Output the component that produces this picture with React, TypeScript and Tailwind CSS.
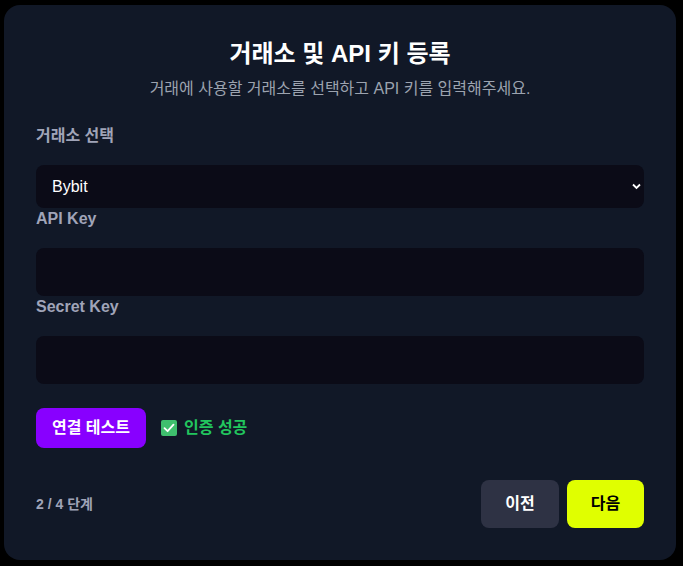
import React from 'react';

const font = { fontFamily: '"Liberation Sans", "Noto Sans CJK KR", sans-serif' };

function CheckBox() {
  return (
    <svg width="16" height="16" viewBox="0 0 16 16" className="shrink-0">
      <rect x="0" y="0" width="16" height="16" rx="2" fill="#3fbf6e" />
      <path d="M3.5 8.2 L6.6 11.2 L12.5 4.6" fill="none" stroke="#ffffff" strokeWidth="1.8" strokeLinecap="round" strokeLinejoin="round" />
    </svg>
  );
}

export default function App() {
  return (
    <div className="min-h-screen bg-black p-[5px_7px_6px_4px]" style={font}>
      <div className="bg-[#111827] rounded-2xl px-8 pt-[33px] pb-8 w-[672px] h-[555px] flex flex-col">
        <h1 className="text-center text-white text-[24px] font-bold leading-8">거래소 및 API 키 등록</h1>
        <p className="text-center text-[#9ca3af] text-[16px] leading-6 mt-[7px]">
          거래에 사용할 거래소를 선택하고 API 키를 입력해주세요.
        </p>

        <label className="block text-[#a0a4b8] text-[16px] font-bold leading-5 mt-[25px] mb-[19px]">거래소 선택</label>
        <div className="relative">
          <select
            defaultValue="Bybit"
            className="appearance-none w-full h-[43px] rounded-lg bg-[#0b0b17] text-white text-[16px] pl-4 pr-8 outline-none"
          >
            <option>Bybit</option>
            <option>Binance</option>
            <option>OKX</option>
          </select>
          <svg className="absolute right-[3px] top-[18px] pointer-events-none" width="9" height="7" viewBox="0 0 9 7">
            <path d="M1 1.5 L4.5 5 L8 1.5" fill="none" stroke="#ffffff" strokeWidth="1.8" />
          </svg>
        </div>

        <label className="block text-[#a0a4b8] text-[16px] font-bold leading-5 mt-px mb-[19px]">API Key</label>
        <input className="w-full h-12 rounded-lg bg-[#0b0b17] text-white px-4 outline-none" />

        <label className="block text-[#a0a4b8] text-[16px] font-bold leading-5 mt-px mb-[19px]">Secret Key</label>
        <input className="w-full h-12 rounded-lg bg-[#0b0b17] text-white px-4 outline-none" />

        <div className="flex items-center gap-[15px] mt-6">
          <button className="h-10 w-[110px] rounded-lg bg-[#8800ff] text-white text-[16px] font-bold">연결 테스트</button>
          <div className="flex items-center gap-[7px] text-[#22c55e] text-[16px] font-bold">
            <CheckBox />
            <span>인증 성공</span>
          </div>
        </div>

        <div className="flex items-center justify-between mt-8">
          <span className="text-[#a0a4b8] text-[14px] font-bold">2 / 4 단계</span>
          <div className="flex gap-2">
            <button className="h-12 w-[78px] rounded-lg bg-[#2e3244] text-white text-[16px] font-bold">이전</button>
            <button className="h-12 w-[77px] rounded-lg bg-[#e0ff00] text-black text-[16px] font-bold">다음</button>
          </div>
        </div>
      </div>
    </div>
  );
}
